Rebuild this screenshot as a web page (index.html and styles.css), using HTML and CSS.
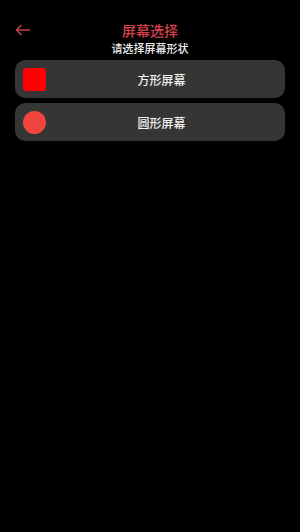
FILE: index.html
```html
<!DOCTYPE html>
<html lang="zh">
<head>
<meta charset="utf-8">
<link rel="stylesheet" href="styles.css">
</head>
<body>
<div class="page">
  <header class="header">
    <svg class="back" width="16" height="12" viewBox="0 0 16 12"><path d="M15 6H1.5M6.5 1L1.5 6l5 5" fill="none" stroke="#c0404c" stroke-width="1.4"/></svg>
    <div class="title">屏幕选择</div>
    <div class="subtitle">请选择屏幕形状</div>
  </header>
  <div class="list">
    <div class="card"><span class="icon square"></span><span class="label">方形屏幕</span></div>
    <div class="card"><span class="icon circle"></span><span class="label">圆形屏幕</span></div>
  </div>
</div>
</body>
</html>
```
FILE: styles.css
```css
html, body { margin: 0; padding: 0; background: #000; }
body { font-family: "Noto Sans CJK SC", "Noto Sans", sans-serif; width: 300px; height: 532px; }
.page { padding: 0 15px; }
.header { position: relative; padding-top: 21px; text-align: center; }
.back { position: absolute; left: 0; top: 24px; }
.title { color: #d8404c; font-size: 14px; line-height: 18px; font-weight: 500; }
.subtitle { color: #f0f0f0; font-size: 11px; line-height: 14px; margin-top: 2px; font-weight: 500; }
.list { margin-top: 5px; display: flex; flex-direction: column; gap: 5px; }
.card { height: 38px; background: #353535; border-radius: 10px; display: flex; align-items: center; padding-left: 8px; }
.icon { width: 23px; height: 23px; flex: none; }
.square { background: #ff0000; border-radius: 3px; }
.circle { background: #f0443e; border-radius: 50%; }
.label { flex: 1; text-align: center; color: #f0f0f0; font-size: 12px; padding-right: 8px; font-weight: 500; }
```
